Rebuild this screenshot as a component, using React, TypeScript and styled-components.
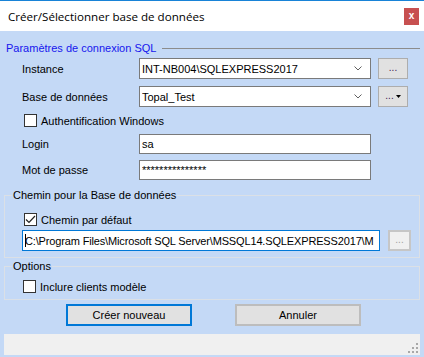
import styled, { createGlobalStyle } from 'styled-components';

const GlobalStyle = createGlobalStyle`
  body {
    margin: 0;
    font-family: "Liberation Sans", Arial, sans-serif;
    font-size: 11px;
    color: #000;
  }
`;

const Frame = styled.div`
  width: 424px;
  height: 357px;
  display: flex;
  flex-direction: column;
  background: #c4d9f6;
  overflow: hidden;
`;

const TitleBar = styled.div`
  height: 30px;
  border-top: 1px solid #1883d7;
  background: #fff;
  display: flex;
  align-items: center;
  padding: 0 5px 0 8px;
`;

const Title = styled.div`
  flex: 1;
  font-family: "Open Sans", "Noto Sans", sans-serif;
  font-size: 11.6px;
  color: #000;
`;

const CloseButton = styled.div`
  width: 15px;
  height: 17px;
  background: #c75050;
  color: #fff;
  font-size: 10px;
  font-weight: bold;
  display: flex;
  align-items: center;
  justify-content: center;
  line-height: 1;
  padding-bottom: 1px;
  box-sizing: border-box;
`;

const Body = styled.div`
  flex: 1;
  display: flex;
  flex-direction: column;
  padding: 0 4px;
`;

const SectionHeader = styled.div`
  margin-top: 9px;
  height: 16px;
  display: flex;
  align-items: center;
  padding-left: 2px;
  color: #1616ee;
`;

const HeaderLine = styled.div`
  flex: 1;
  height: 1px;
  background: #8c8c8c;
  margin-left: 6px;
  margin-top: 1px;
`;

const Row = styled.div<{ $top: number; $h?: number; $indent?: number }>`
  display: flex;
  align-items: center;
  margin-top: ${(p) => p.$top}px;
  height: ${(p) => p.$h ?? 21}px;
  padding-left: ${(p) => p.$indent ?? 0}px;
`;

const Label = styled.div`
  width: 135px;
  padding-left: 18px;
  box-sizing: border-box;
`;

const Field = styled.div<{ $w: number; $h?: number; $focus?: boolean }>`
  width: ${(p) => p.$w}px;
  height: ${(p) => p.$h ?? 21}px;
  box-sizing: border-box;
  background: #fff;
  border: 1px solid ${(p) => (p.$focus ? '#0078d7' : '#7a7a7a')};
  display: flex;
  align-items: center;
  padding-left: 2px;
  overflow: hidden;
  white-space: nowrap;
  letter-spacing: ${(p) => (p.$focus ? '-0.15px' : 'normal')};
`;

const FieldText = styled.span`
  flex: 1;
  min-width: 0;
  overflow: hidden;
`;

const Caret = styled.span`
  width: 1px;
  height: 13px;
  background: #000;
  margin-right: -1px;
  flex-shrink: 0;
`;

const Arrow = styled.svg`
  width: 8px;
  height: 5px;
  margin: 0 8px 0 4px;
  flex-shrink: 0;
`;

const SmallButton = styled.div<{ $w?: number; $disabled?: boolean }>`
  margin-left: ${(p) => (p.$disabled ? 8 : 7)}px;
  width: ${(p) => p.$w ?? 30}px;
  height: 21px;
  box-sizing: border-box;
  background: ${(p) => (p.$disabled ? '#f0f0f0' : '#e1e1e1')};
  border: ${(p) => (p.$disabled ? '2px solid #c6c6c6' : '1px solid #adadad')};
  color: ${(p) => (p.$disabled ? '#a0a0a0' : '#402050')};
  display: flex;
  align-items: center;
  justify-content: center;
  gap: 2px;
  font-size: 10px;
  padding-bottom: 2px;
`;

const Tri = styled.svg`
  width: 5px;
  height: 3px;
  margin-top: 2px;
`;

const CheckRow = styled.div<{ $top: number; $indent: number }>`
  display: flex;
  align-items: center;
  gap: 4px;
  height: 13px;
  margin-top: ${(p) => p.$top}px;
  padding-left: ${(p) => p.$indent}px;
`;

const Box = styled.div`
  width: 13px;
  height: 13px;
  box-sizing: border-box;
  border: 1px solid #333;
  background: #fff;
  display: flex;
  align-items: center;
  justify-content: center;
`;

const Group = styled.fieldset<{ $top: number; $bottom: number }>`
  margin: ${(p) => p.$top}px 0 0 0;
  padding: 0 0 ${(p) => p.$bottom}px 0;
  border: 1px solid #dbe0e6;
  min-width: 0;
`;

const Legend = styled.legend`
  margin-left: 7px;
  padding: 0 1px;
  line-height: 13px;
  font-size: 11px;
`;

const ButtonRow = styled.div`
  display: flex;
  gap: 43px;
  margin-top: 4px;
  padding-left: 62px;
`;

const DialogButton = styled.div<{ $primary?: boolean }>`
  width: 126px;
  height: 22px;
  box-sizing: border-box;
  background: #e1e1e1;
  border: 2px solid ${(p) => (p.$primary ? '#0078d7' : '#bdbdbd')};
  display: flex;
  align-items: center;
  justify-content: center;
  font-size: 11px;
`;

const StatusBar = styled.div`
  margin-top: 8px;
  height: 21px;
  background: #f0f0f0;
  display: flex;
  justify-content: flex-end;
  align-items: flex-end;
`;

const Grip = styled.svg`
  width: 12px;
  height: 12px;
  margin: 0 1px 1px 0;
`;

function Check({ checked }: { checked?: boolean }) {
  return (
    <Box>
      {checked && (
        <svg width="11" height="9" viewBox="0 0 11 9">
          <path d="M1 4.5 L4 7.5 L10 1" fill="none" stroke="#222" strokeWidth="1.2" />
        </svg>
      )}
    </Box>
  );
}

function DropArrow() {
  return (
    <Arrow viewBox="0 0 8 5">
      <path d="M0.5 0.5 L4 4 L7.5 0.5" fill="none" stroke="#606060" strokeWidth="1" />
    </Arrow>
  );
}

function App() {
  const grip = [
    [10, 2],
    [6, 6], [10, 6],
    [2, 10], [6, 10], [10, 10],
  ];

  return (
    <>
      <GlobalStyle />
      <Frame>
        <TitleBar>
          <Title>Créer/Sélectionner base de données</Title>
          <CloseButton>x</CloseButton>
        </TitleBar>
        <Body>
          <SectionHeader>
            Paramètres de connexion SQL
            <HeaderLine />
          </SectionHeader>

          <Row $top={2}>
            <Label>Instance</Label>
            <Field $w={232}>
              <FieldText>INT-NB004\SQLEXPRESS2017</FieldText>
              <DropArrow />
            </Field>
            <SmallButton>...</SmallButton>
          </Row>

          <Row $top={7}>
            <Label>Base de données</Label>
            <Field $w={232}>
              <FieldText>Topal_Test</FieldText>
              <DropArrow />
            </Field>
            <SmallButton>
              ...
              <Tri viewBox="0 0 5 3">
                <path d="M0 0 L5 0 L2.5 3 Z" fill="#000" />
              </Tri>
            </SmallButton>
          </Row>

          <CheckRow $top={7} $indent={20}>
            <Check />
            Authentification Windows
          </CheckRow>

          <Row $top={7} $h={20}>
            <Label>Login</Label>
            <Field $w={232} $h={20}>
              <FieldText>sa</FieldText>
            </Field>
          </Row>

          <Row $top={6} $h={20}>
            <Label>Mot de passe</Label>
            <Field $w={232} $h={20}>
              <FieldText>***************</FieldText>
            </Field>
          </Row>

          <Group $top={9} $bottom={6}>
            <Legend>Chemin pour la Base de données</Legend>
            <CheckRow $top={11} $indent={19}>
              <Check checked />
              Chemin par défaut
            </CheckRow>
            <Row $top={4} $indent={17}>
              <Field $w={358} $focus>
                <Caret />
                <FieldText>C:\Program Files\Microsoft SQL Server\MSSQL14.SQLEXPRESS2017\M</FieldText>
              </Field>
              <SmallButton $w={23} $disabled>...</SmallButton>
            </Row>
          </Group>

          <Group $top={2} $bottom={6}>
            <Legend>Options</Legend>
            <CheckRow $top={7} $indent={18}>
              <Check />
              Inclure clients modèle
            </CheckRow>
          </Group>

          <ButtonRow>
            <DialogButton $primary>Créer nouveau</DialogButton>
            <DialogButton>Annuler</DialogButton>
          </ButtonRow>

          <StatusBar>
            <Grip viewBox="0 0 12 12">
              {grip.map(([x, y]) => (
                <rect key={`${x}-${y}`} x={x - 1} y={y - 1} width="2" height="2" fill="#a8a8a8" />
              ))}
            </Grip>
          </StatusBar>
        </Body>
      </Frame>
    </>
  );
}

export default App;
